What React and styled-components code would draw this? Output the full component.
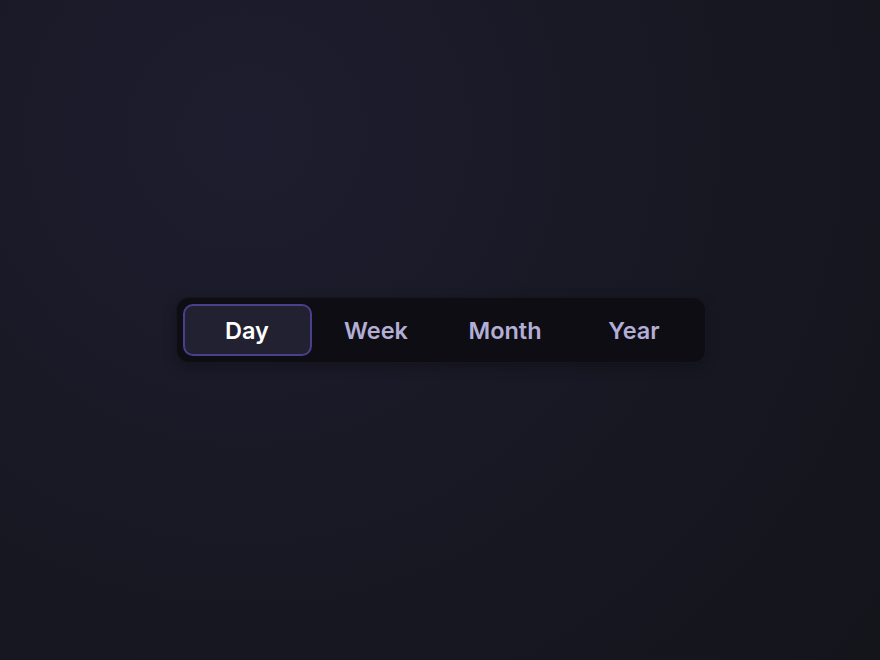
import React, { useState } from 'react'
import styled, { createGlobalStyle } from 'styled-components'

// -- -- --

const GlobalStyle = createGlobalStyle`
  html, body, #root {
    margin: 0;
    height: 100%;
  }
  body {
    font-family: Inter, 'Noto Sans', sans-serif;
    background: radial-gradient(circle at 28% 20%, #1e1d2f 0%, #191926 40%, #14141b 100%);
  }
`

const Page = styled.div`
  height: 100%;
  display: flex;
  align-items: center;
  justify-content: center;
  padding-left: 1px;
  box-sizing: border-box;
`

const Segmented = styled.div`
  display: flex;
  padding: 6px;
  background: #0e0d13;
  border: 1px solid rgba(255, 255, 255, 0.04);
  border-radius: 13px;
  box-shadow: 0 4px 14px rgba(0, 0, 0, 0.25);
`

const Option = styled.button`
  width: 129px;
  height: 52px;
  display: flex;
  align-items: center;
  justify-content: center;
  font-family: inherit;
  font-size: 23.5px;
  font-weight: 600;
  border-radius: 10px;
  cursor: pointer;
  box-sizing: border-box;
  color: ${({ active }) => (active ? '#ffffff' : '#b3aed6')};
  background: ${({ active }) => (active ? '#222132' : 'transparent')};
  border: 2px solid ${({ active }) => (active ? '#4b3f8c' : 'transparent')};
`

// -- -- --

const ranges = ['Day', 'Week', 'Month', 'Year']

const App = () => {
  const [range, setRange] = useState('Day')

  return (
    <>
      <GlobalStyle />
      <Page>
        <Segmented>
          {ranges.map((r) => (
            <Option key={r} active={r === range ? 1 : 0} onClick={() => setRange(r)}>
              {r}
            </Option>
          ))}
        </Segmented>
      </Page>
    </>
  )
}

export default App
